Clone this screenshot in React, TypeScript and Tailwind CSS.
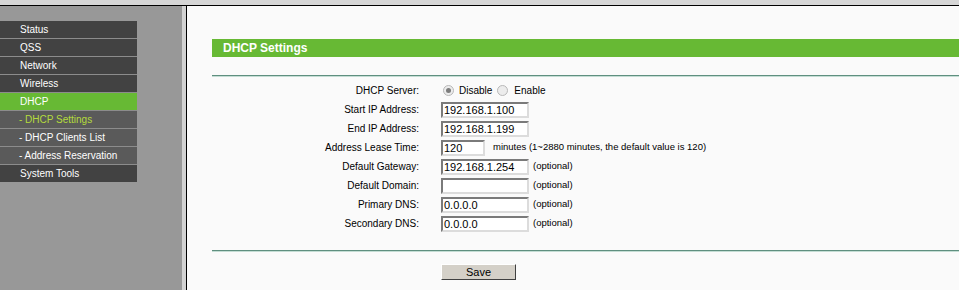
import React from "react";

const menu = [
  { label: "Status", kind: "top" },
  { label: "QSS", kind: "top" },
  { label: "Network", kind: "top" },
  { label: "Wireless", kind: "top" },
  { label: "DHCP", kind: "active" },
  { label: "- DHCP Settings", kind: "subActive" },
  { label: "- DHCP Clients List", kind: "sub" },
  { label: "- Address Reservation", kind: "sub" },
  { label: "System Tools", kind: "top" },
];

const rowBg: Record<string, string> = {
  top: "bg-[#424242] text-white pl-[20px]",
  active: "bg-[#67b934] text-white pl-[20px]",
  subActive: "bg-[#5a5a5a] text-[#b4dc3c] pl-[19px]",
  sub: "bg-[#5a5a5a] text-white pl-[19px]",
};

const TextBox = ({ value, w = "w-[88px]" }: { value: string; w?: string }) => (
  <div
    className={`${w} h-[16px] bg-white border-2 border-t-[#7a7a7a] border-l-[#7a7a7a] border-b-[#dcdcdc] border-r-[#dcdcdc] text-[11px] leading-[12px] pl-[1px] text-black`}
  >
    {value}
  </div>
);

const Radio = ({ checked }: { checked?: boolean }) => (
  <span className="w-[11px] h-[11px] rounded-full border border-[#b8b8b8] bg-[#ececec] flex items-center justify-center">
    {checked && <span className="w-[5px] h-[5px] rounded-full bg-[#7c7c7c]" />}
  </span>
);

const Row = ({ label, children }: { label: string; children: React.ReactNode }) => (
  <div className="flex items-center h-[19px]">
    <div className="w-[207px] text-right text-[10px] text-black">{label}</div>
    <div className="ml-[22px] flex items-center text-[10px] text-black">{children}</div>
  </div>
);

const Optional = () => <span className="ml-[4px] text-[9.5px]">(optional)</span>;

const Divider = () => (
  <div>
    <div className="h-px bg-[#5f8f7f]" />
    <div className="h-px bg-[#c4ddd4]" />
  </div>
);

export default function App() {
  return (
    <div className="w-[959px] h-[290px] overflow-hidden flex flex-col font-['Liberation_Sans',Arial,sans-serif]">
      <div className="h-[5px] bg-[#d6d6d6] shrink-0" />
      <div className="h-px bg-black shrink-0" />
      <div className="flex flex-1 min-h-0">
        <aside className="w-[182px] bg-[#989898] pt-[15px] shrink-0">
          <ul className="w-[137px]">
            {menu.map((m) => (
              <li
                key={m.label}
                className={`h-[18px] flex items-center text-[10px] border-b border-[#8c8c8c] last:border-b-0 last:h-[17px] ${rowBg[m.kind]}`}
              >
                {m.label}
              </li>
            ))}
          </ul>
        </aside>
        <div className="w-[4px] bg-[#d2d2d2] shrink-0" />
        <div className="w-px bg-black shrink-0" />
        <main className="flex-1 bg-[#fafafa] pl-[25px] pt-[33px]">
          <div className="h-[18px] bg-[#67b934] flex items-center pl-[11px] text-white text-[12px] font-bold">
            DHCP Settings
          </div>
          <div className="mt-[18px]">
            <Divider />
          </div>
          <div className="mt-[4px]">
            <Row label="DHCP Server:">
              <span className="ml-[2px]">
                <Radio checked />
              </span>
              <span className="ml-[5px]">Disable</span>
              <span className="ml-[5px]">
                <Radio />
              </span>
              <span className="ml-[6px]">Enable</span>
            </Row>
            <Row label="Start IP Address:">
              <TextBox value="192.168.1.100" />
            </Row>
            <Row label="End IP Address:">
              <TextBox value="192.168.1.199" />
            </Row>
            <Row label="Address Lease Time:">
              <TextBox value="120" w="w-[44px]" />
              <span className="ml-[8px] text-[9.5px]">
                minutes (1~2880 minutes, the default value is 120)
              </span>
            </Row>
            <Row label="Default Gateway:">
              <TextBox value="192.168.1.254" />
              <Optional />
            </Row>
            <Row label="Default Domain:">
              <TextBox value="" />
              <Optional />
            </Row>
            <Row label="Primary DNS:">
              <TextBox value="0.0.0.0" />
              <Optional />
            </Row>
            <Row label="Secondary DNS:">
              <TextBox value="0.0.0.0" />
              <Optional />
            </Row>
          </div>
          <div className="mt-[17px]">
            <Divider />
          </div>
          <div className="mt-[7px] pl-[229px]">
            <button className="w-[75px] h-[16px] bg-[#d4d0c8] border border-t-white border-l-white border-b-[#404040] border-r-[#404040] text-[11px] leading-[12px] text-black">
              Save
            </button>
          </div>
        </main>
      </div>
    </div>
  );
}
